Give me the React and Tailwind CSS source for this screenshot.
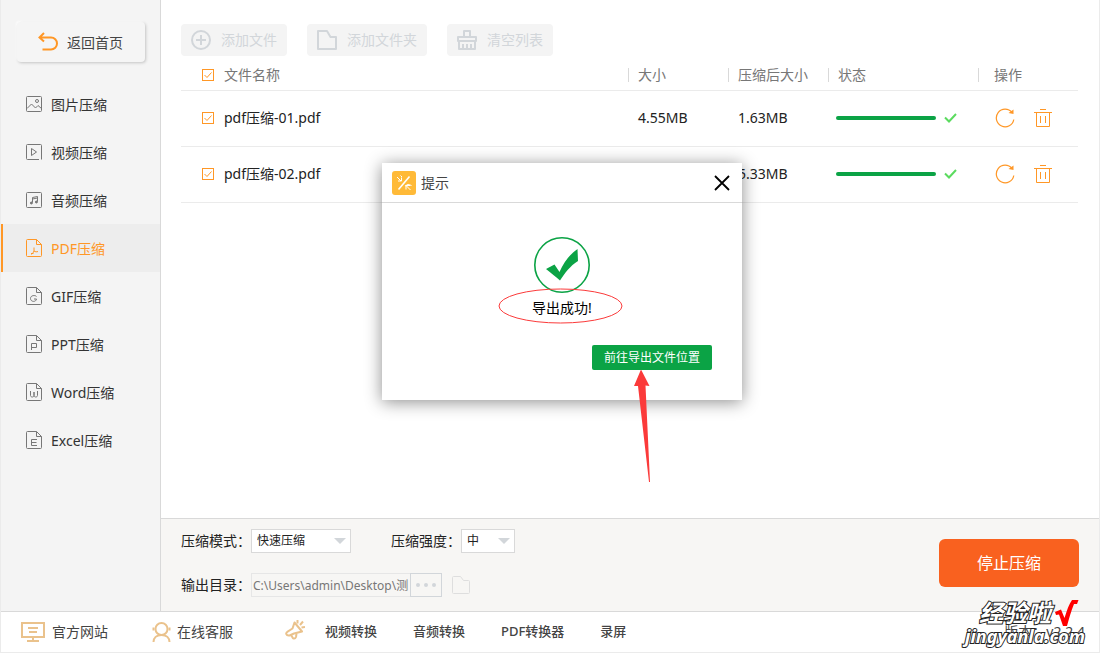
import React from 'react';

const navItems = [
  { label: '图片压缩', icon: 'image' },
  { label: '视频压缩', icon: 'video' },
  { label: '音频压缩', icon: 'audio' },
  { label: 'PDF压缩', icon: 'pdf', active: true },
  { label: 'GIF压缩', icon: 'gif' },
  { label: 'PPT压缩', icon: 'ppt' },
  { label: 'Word压缩', icon: 'word' },
  { label: 'Excel压缩', icon: 'excel' },
];

const files = [
  { name: 'pdf压缩-01.pdf', size: '4.55MB', after: '1.63MB' },
  { name: 'pdf压缩-02.pdf', size: '', after: '5.33MB' },
];

const glyphs = {
  image: (
    <>
      <rect x="0.5" y="1.5" width="15" height="15" rx="1" />
      <circle cx="11" cy="6" r="1.5" />
      <path d="M1 13.5 5.5 9l4 4 2.5-2.5 3.5 3" />
    </>
  ),
  video: (
    <>
      <path d="M13 16.5H1.5a1 1 0 0 1-1-1v-13a1 1 0 0 1 1-1h13a1 1 0 0 1 1 1v14" />
      <path d="M5.5 5.5v7l5-3.5z" />
    </>
  ),
  audio: (
    <>
      <rect x="0.5" y="1.5" width="15" height="15" rx="1" />
      <path d="M6.5 11.5V6.5l5-1v5" />
      <path d="M6.5 8l5-1" />
      <circle cx="5.4" cy="12" r="1" fill="currentColor" />
      <circle cx="10.4" cy="11" r="1" fill="currentColor" />
    </>
  ),
  pdf: <path d="M8 8.5v3.5c-.5 1.5-1.5 2.5-2.5 3.5m2.5-3.500c1.500 1 2.500 1 4 .5M5 14.500h2.500" />,
  gif: <path d="M10.500 9.500C9.500 8 4.500 8 4.500 11.500s5.500 4 6 .5H8" />,
  ppt: <path d="M5.500 15V8.500h5v4h-5" />,
  word: <path d="M4.500 8v4.500c0 2 3.500 2 3.500 0V9v3.500c0 2 3.500 2 3.500 0V8" />,
  excel: <path d="M11 8.500H5.500v6H11M5.500 11.500H10.500" />,
};

const NavIcon = ({ name }) => {
  const isFile = !['image', 'video', 'audio'].includes(name);
  return (
    <svg className="w-4 h-[18px] shrink-0" viewBox="0 0 16 18" fill="none" stroke="currentColor">
      {isFile && (
        <path d="M10.500.5h-9a1 1 0 0 0-1 1v15a1 1 0 0 0 1 1h13a1 1 0 0 0 1-1V5.500zv5h5" />
      )}
      {glyphs[name]}
    </svg>
  );
};

const Sidebar = () => (
  <aside className="w-40 shrink-0 bg-[#f4f4f4] border-r border-[#d9d9d9] pt-[22px]">
    <button className="ml-4 w-32 h-10 rounded bg-[#f5f5f5] shadow-[1px_1px_3px_#c4c4c4,-1px_-1px_2px_#ffffff] flex items-center pl-[21px] gap-[9px] text-sm text-[#444]">
      <svg className="w-5 h-5" viewBox="0 0 20 20" fill="none" stroke="#ff9726" strokeWidth="2">
        <path d="M6 1 1.500 5.500 6 9.500M2 5.500h11a6 6 0 0 1 0 12H4.500" />
      </svg>
      <span className="pt-px">返回首页</span>
    </button>
    <nav className="mt-[18px]">
      {navItems.map((item) => (
        <a
          key={item.label}
          href="#"
          className={
            item.active
              ? 'h-12 flex items-center gap-[9px] pl-[23px] border-l-2 border-[#ff9726] bg-[#ededed] text-sm text-[#ff9726]'
              : 'h-12 flex items-center gap-[9px] pl-[25px] text-sm text-[#333]'
          }
        >
          <span className={item.active ? 'flex' : 'flex text-[#777]'}>
            <NavIcon name={item.icon} />
          </span>
          <span className="pt-px">{item.label}</span>
        </a>
      ))}
    </nav>
  </aside>
);

const ToolIcon = ({ children }) => (
  <svg className="w-5 h-5" viewBox="0 0 20 20" fill="none" stroke="#d2d6da" strokeWidth="2">
    {children}
  </svg>
);

const toolClass = 'h-8 px-[10px] rounded bg-[#f4f4f4] flex items-center gap-[10px] text-sm text-[#d2d6da]';

const Toolbar = () => (
  <div className="flex gap-5">
    <button className={toolClass}>
      <ToolIcon>
        <circle cx="10" cy="10" r="9" />
        <path d="M10 5v10M5 10h10" />
      </ToolIcon>
      添加文件
    </button>
    <button className={toolClass}>
      <ToolIcon>
        <path d="M1 1h9l3.500 6H19v12H1z" strokeLinejoin="round" />
      </ToolIcon>
      添加文件夹
    </button>
    <button className={toolClass}>
      <ToolIcon>
        <path d="M7 7V1h6v6M1 7h18v4H1zM2 11v8h16v-8M6 14v5M10 14v5M14 14v5" strokeLinejoin="round" />
      </ToolIcon>
      清空列表
    </button>
  </div>
);

const CheckBox = ({ label }) => (
  <span className="grid place-items-center w-3 h-3 shrink-0">
    <input
      type="checkbox"
      defaultChecked
      aria-label={label}
      className="peer col-start-1 row-start-1 appearance-none w-3 h-3 border border-[#ff9726] bg-white"
    />
    <svg className="col-start-1 row-start-1 w-2 h-2 pointer-events-none invisible peer-checked:visible" viewBox="0 0 8 8" fill="none" stroke="#ff9726">
      <path d="M.5 4 3 6.500 7.500 1.500" />
    </svg>
  </span>
);

const HeadCell = ({ children }) => (
  <th className="p-0 font-normal text-left">
    <div className="h-[14px] border-l border-[#d9d9d9] flex items-center pl-[9px]">{children}</div>
  </th>
);

const FileTable = () => (
  <table className="w-full table-fixed border-collapse text-sm text-[#222]">
    <colgroup>
      <col />
      <col className="w-[100px]" />
      <col className="w-[100px]" />
      <col className="w-[150px]" />
      <col className="w-[100px]" />
    </colgroup>
    <thead>
      <tr className="h-[30px] border-b border-[#ebebeb] text-[#777]">
        <th className="p-0 pl-[21px] font-normal text-left">
          <div className="flex items-center gap-[10px]">
            <CheckBox label="全选" />
            文件名称
          </div>
        </th>
        <HeadCell>大小</HeadCell>
        <HeadCell>压缩后大小</HeadCell>
        <HeadCell>状态</HeadCell>
        <th className="p-0 font-normal text-left">
          <div className="h-[14px] border-l border-[#d9d9d9] flex items-center pl-[15px]">操作</div>
        </th>
      </tr>
    </thead>
    <tbody>
      {files.map((file) => (
        <tr key={file.name} className="h-14 border-b border-[#ebebeb]">
          <td className="p-0 pl-[21px]">
            <div className="flex items-center gap-[10px]">
              <CheckBox label={file.name} />
              {file.name}
            </div>
          </td>
          <td className="p-0 pl-[10px]">{file.size}</td>
          <td className="p-0 pl-[10px]">{file.after}</td>
          <td className="p-0 pl-2">
            <div className="flex items-center gap-2">
              <div className="w-[100px] h-1 rounded-full bg-[#0ba345]" />
              <svg className="w-[13px] h-[10px]" viewBox="0 0 13 10" fill="none" stroke="#5bdb5f" strokeWidth="2">
                <path d="M1 4.500 5 8.500 12 1" />
              </svg>
            </div>
          </td>
          <td className="p-0 pl-[17px]">
            <div className="flex items-center gap-[19px]">
              <button aria-label="重试">
                <svg className="block w-5 h-5" viewBox="0 0 20 20" fill="none" stroke="#ff9726" strokeWidth="1.200">
                  <path d="M17 4.500A8.800 8.800 0 1 0 18.800 11.500" />
                  <path d="M18.500 1.500V6l-5-1z" fill="#ff9726" stroke="none" />
                </svg>
              </button>
              <button aria-label="删除">
                <svg className="block w-[18px] h-5" viewBox="0 0 18 20" fill="none" stroke="#ff9726">
                  <path d="M6 1.500h6M0 4.500h18M2.500 4.500v14h13v-14M6.500 8v7M11.500 8v7" />
                </svg>
              </button>
            </div>
          </td>
        </tr>
      ))}
    </tbody>
  </table>
);

const Select = ({ id, label, value, className }) => (
  <div className="flex items-center">
    <label htmlFor={id} className="w-[70px] text-sm">{label}</label>
    <div className="grid items-center">
      <select
        id={id}
        className={`col-start-1 row-start-1 appearance-none h-6 pl-[5px] text-xs bg-white border border-[#d9d9d9] ${className}`}
      >
        <option>{value}</option>
      </select>
      <svg className="col-start-1 row-start-1 justify-self-end mr-[5px] w-3 h-[6px] pointer-events-none" viewBox="0 0 12 6" fill="#d2d6da">
        <path d="M0 0h12L6 6z" />
      </svg>
    </div>
  </div>
);

const Settings = () => (
  <section className="shrink-0 bg-[#f7f6f4] border-t border-[#d9d9d9] pt-[10px] pb-[14px] px-5 flex justify-between items-center text-[#222]">
    <div className="flex flex-col gap-5">
      <div className="flex gap-10">
        <Select id="mode" label="压缩模式：" value="快速压缩" className="w-[100px]" />
        <Select id="level" label="压缩强度：" value="中" className="w-[54px]" />
      </div>
      <div className="flex items-center">
        <label htmlFor="output" className="w-[70px] text-sm">输出目录：</label>
        <input
          id="output"
          readOnly
          defaultValue="C:\Users\admin\Desktop\测"
          className="w-[159px] h-6 pl-px text-xs text-[#777] border border-r-0 border-[#e6e6e6] bg-transparent"
        />
        <button aria-label="浏览" className="w-8 h-6 border border-[#d2d6da] flex items-center justify-center gap-1">
          <span className="w-1 h-1 rounded-full bg-[#d2d6da]" />
          <span className="w-1 h-1 rounded-full bg-[#d2d6da]" />
          <span className="w-1 h-1 rounded-full bg-[#d2d6da]" />
        </button>
        <button aria-label="打开目录" className="ml-[10px]">
          <svg className="block w-[18px] h-[18px]" viewBox="0 0 18 18" fill="none" stroke="#dedede">
            <path d="M.5 1.500a1 1 0 0 1 1-1h7l3 4h5a1 1 0 0 1 1 1v11a1 1 0 0 1-1 1h-15a1 1 0 0 1-1-1z" />
          </svg>
        </button>
      </div>
    </div>
    <button className="w-[140px] h-12 rounded-md bg-[#f9611f] text-white text-base">停止压缩</button>
  </section>
);

const Footer = () => (
  <footer className="h-[41px] shrink-0 border-t border-[#d9d9d9] bg-white flex items-center pl-5 pr-[14px] text-[#444]">
    <a href="#" className="flex items-center gap-[7px] text-sm">
      <svg className="w-6 h-5" viewBox="0 0 24 20" fill="none" stroke="#eac28c" strokeWidth="2">
        <path d="M1 1h22v14H1zM12 15v4M6 19h12M7 6h10M8 10h8" />
      </svg>
      官方网站
    </a>
    <a href="#" className="ml-11 flex items-center gap-[6px] text-sm">
      <svg className="w-[19px] h-5" viewBox="0 0 19 20" fill="none" stroke="#eac28c" strokeWidth="2">
        <circle cx="9.500" cy="7" r="6" />
        <path d="M1.500 5.500v3M17.500 5.500v3M1.500 20c0-4 3-7 8-7s8 3 8 7" />
      </svg>
      在线客服
    </a>
    <svg className="ml-[52px] mb-1 w-5 h-5" viewBox="0 0 20 20" fill="none" stroke="#eac28c" strokeWidth="2" strokeLinejoin="round">
      <path d="M9.500 2.500 17 11.500 9 13.500 4.500 15.500Q2 16 1.200 13.800 1 12.500 3 11.300L7.500 8.500z" />
      <path d="M6 15l2 3.300q2.200.8 3-1.300l.5-3.500M12.500 3.500V0M15 5l3-3.500M16.500 7.500l3.500-.5" />
    </svg>
    <nav className="ml-5 flex items-center gap-9 text-[13px] font-medium">
      <a href="#">视频转换</a>
      <a href="#">音频转换</a>
      <a href="#">PDF转换器</a>
      <a href="#">录屏</a>
    </nav>
    <span className="ml-auto text-sm">版本：v2.2.4</span>
  </footer>
);

const Dialog = () => (
  <div role="dialog" aria-label="提示" className="absolute left-[381px] top-[163px] w-[360px] h-[237px] bg-white shadow-[0_2px_16px_rgba(0,0,0,0.45)]">
    <div className="h-10 border-b border-[#d9d9d9] flex items-center pl-[10px] pr-3 text-sm text-[#444]">
      <svg className="w-6 h-6 mr-[5px]" viewBox="0 0 24 24" fill="none" stroke="#fff">
        <rect width="24" height="24" rx="3" fill="#ffba38" stroke="none" />
        <path d="M17.500 5.500 6.500 18.500" strokeWidth="1.600" />
        <path d="M5 6l4 4M9.500 6.500v3.500H6M8.500 4.500l1.500 1.500M18.500 19l-4-4M14 18.500v-4h4M13 15q3-3 6.500-.5" />
      </svg>
      <span className="pt-px">提示</span>
      <button aria-label="关闭" className="ml-auto">
        <svg className="block w-4 h-4" viewBox="0 0 16 16" stroke="#000" strokeWidth="1.800">
          <path d="M1 1l14 14M15 1 1 15" />
        </svg>
      </button>
    </div>
    <div className="flex flex-col items-center pt-[34px]">
      <svg className="w-14 h-14" viewBox="0 0 56 56">
        <circle cx="28" cy="28" r="27.200" fill="none" stroke="#0ba345" strokeWidth="1.600" />
        <path d="M12 32 20.500 27.500 25.500 35C30 25 36 17 43.500 12L44 24C36 29 31 36 26 43.500 22 40 17 36 12 32z" fill="#0ba345" />
      </svg>
      <p className="mt-[5px] text-sm leading-5 text-black">导出成功!</p>
      <button className="mt-[27px] mr-[30px] self-end w-[120px] h-[25px] rounded-xs bg-[#0ba345] text-white text-xs">
        前往导出文件位置
      </button>
    </div>
    {/* Callouts drawn over the dialog */}
    <svg className="absolute left-[116px] top-[125px] w-[160px] h-[196px] pointer-events-none" viewBox="0 0 160 196">
      <ellipse cx="62.500" cy="18" rx="61.500" ry="17" fill="none" stroke="#fb3a3a" />
      <path d="M143 81.500 151.500 98 147.500 97.500 152 194H151L140 98 136 98z" fill="#fb3a3a" />
    </svg>
  </div>
);

const Watermark = () => (
  <div className="absolute right-[14px] bottom-[6px] flex flex-col items-end pointer-events-none font-bold italic text-white">
    <div className="mr-[6px] flex items-center text-2xl leading-6 [-webkit-text-stroke:2px_#222] [paint-order:stroke_fill]">
      经验啦
      <svg className="ml-1 w-6 h-[26px]" viewBox="0 0 24 26" fill="#f00">
        <path d="M0 12 6 9.500 9.500 18C12 10 14 4 17 0h6.500L22 4h-3C16 11 14 19 12 26H8L4 14.500 1 15z" />
      </svg>
    </div>
    <div className="text-lg leading-5 [-webkit-text-stroke:2px_#222] [paint-order:stroke_fill]">jingyanla.com</div>
  </div>
);

export default function App() {
  return (
    <div className="relative min-h-screen flex flex-col bg-white border border-t-0 border-[#ebebeb] font-['Noto_Sans','Noto_Sans_CJK_SC',sans-serif]">
      <div className="flex-1 flex">
        <Sidebar />
        <div className="flex-1 min-w-0 flex flex-col">
          <main className="flex-1 pt-6 pl-5 pr-[21px]">
            <Toolbar />
            <div className="mt-1">
              <FileTable />
            </div>
          </main>
          <Settings />
        </div>
      </div>
      <Footer />
      <Dialog />
      <Watermark />
    </div>
  );
}
